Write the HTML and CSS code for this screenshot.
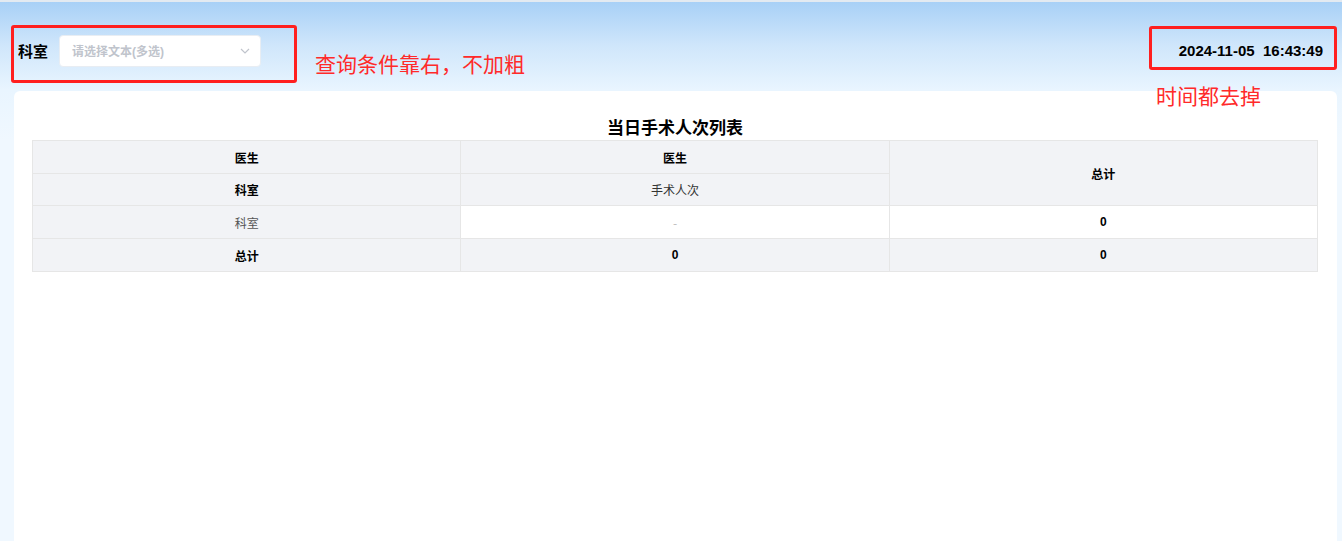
FILE: index.html
```html
<!DOCTYPE html>
<html lang="zh-CN">
<head>
    <meta charset="UTF-8">
    <meta name="viewport" content="width=device-width, initial-scale=1.0">
    <title>当日手术人次列表</title>
    <link rel="stylesheet" href="styles.css">
</head>
<body>

    <header class="top-bar">
        <div class="filter">
            <span class="filter-label">科室</span>
            <div class="select">
                <span class="select-placeholder">请选择文本(多选)</span>
                <svg class="select-arrow" width="10" height="6" viewBox="0 0 10 6">
                    <path d="M1 1 L5 5 L9 1" fill="none" stroke="#c0c4cc" stroke-width="1.2"/>
                </svg>
            </div>
        </div>
        <div class="clock">2024-11-05&nbsp;&nbsp;16:43:49</div>
    </header>

    <main class="card">
        <h2 class="table-title">当日手术人次列表</h2>
        <table class="report">
            <tr class="head">
                <td class="bold">医生</td>
                <td class="bold">医生</td>
                <td class="bold" rowspan="2">总计</td>
            </tr>
            <tr class="head short">
                <td class="bold">科室</td>
                <td>手术人次</td>
            </tr>
            <tr>
                <td class="gray muted">科室</td>
                <td class="empty">-</td>
                <td class="bold">0</td>
            </tr>
            <tr class="total">
                <td class="bold">总计</td>
                <td class="bold">0</td>
                <td class="bold">0</td>
            </tr>
        </table>
    </main>

    <!-- review notes drawn over the screenshot -->
    <div class="note-box note-box-left"></div>
    <div class="note-box note-box-right"></div>
    <div class="note note-left">查询条件靠右，不加粗</div>
    <div class="note note-right">时间都去掉</div>

</body>
</html>
```

FILE: styles.css
```css
html, body {
    height: 100%;
}
body {
    margin: 0;
    font-family: "Liberation Sans", "Noto Sans CJK SC", sans-serif;
    color: #000;
    background: linear-gradient(180deg, #a6cff6 0px, #cfe6fb 45px, #e9f5ff 90px, #f0f8ff 140px);
    border-top: 2px solid #e3eaf1;
    box-sizing: border-box;
    display: flex;
    flex-direction: column;
    overflow: hidden;
}
.top-bar {
    height: 89px;
    display: flex;
    align-items: center;
    justify-content: space-between;
    padding: 8px 19px 0 18px;
    box-sizing: border-box;
}
.filter {
    display: flex;
    align-items: center;
    gap: 11px;
}
.filter-label {
    font-size: 15px;
    font-weight: bold;
}
.select {
    width: 202px;
    height: 32px;
    box-sizing: border-box;
    background: #fff;
    border: 1px solid #e8edf3;
    border-radius: 4px;
    display: flex;
    align-items: center;
    justify-content: space-between;
    padding: 0 10px 0 12px;
}
.select-placeholder {
    font-size: 12px;
    font-weight: bold;
    color: #c0c4cc;
}
.clock {
    font-size: 15px;
    font-weight: bold;
}
.card {
    flex: 1;
    margin: 0 5px 0 14px;
    background: #fff;
    border-radius: 6px 6px 0 0;
    padding: 26px 19px 0 18px;
}
.table-title {
    margin: 0;
    font-size: 17px;
    line-height: 23px;
    text-align: center;
    font-weight: bold;
}
.report {
    width: 100%;
    border-collapse: collapse;
    table-layout: fixed;
    font-size: 12px;
    font-family: "Noto Sans CJK SC", "Liberation Sans", sans-serif;
}
.report td {
    border: 1px solid #e6e6e6;
    height: 32px;
    padding: 0;
    text-align: center;
    color: #333;
}
.report .short td {
    height: 31px;
}
.report .head td,
.report .total td,
.report td.gray {
    background: #f2f3f6;
}
.report td.bold {
    font-weight: bold;
    color: #000;
    font-family: "Liberation Sans", "Noto Sans CJK SC", sans-serif;
}
.report td.muted {
    color: #555;
}
.report td.empty {
    color: #bbb;
}
.note-box {
    position: absolute;
    border: 3px solid #ff1f1f;
    border-radius: 3px;
    box-sizing: border-box;
}
.note-box-left {
    left: 11px;
    top: 25px;
    width: 286px;
    height: 58px;
}
.note-box-right {
    left: 1149px;
    top: 26px;
    width: 188px;
    height: 44px;
}
.note {
    position: absolute;
    color: #ff2a2a;
    font-size: 21px;
    line-height: 28px;
    font-family: "Noto Sans CJK SC", sans-serif;
}
.note-left {
    left: 315px;
    top: 49px;
}
.note-right {
    left: 1156px;
    top: 81px;
}
```
